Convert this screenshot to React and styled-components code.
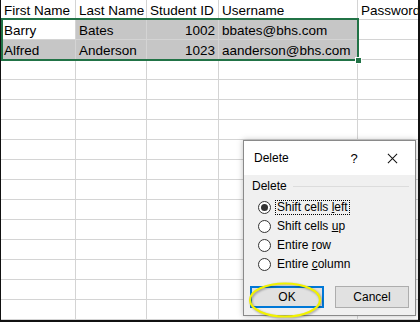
import React from "react";
import styled, { createGlobalStyle } from "styled-components";

const GlobalStyle = createGlobalStyle`
  html, body {
    margin: 0;
    padding: 0;
    background: #fff;
  }
`;

const columns = [75, 71, 72, 139, 110];

const rows = [
  ["First Name", "Last Name", "Student ID", "Username", "Password"],
  ["Barry", "Bates", "1002", "bbates@bhs.com", ""],
  ["Alfred", "Anderson", "1023", "aanderson@bhs.com", ""],
];

const TOTAL_ROWS = 17;

function isSelected(r, c) {
  return (r === 1 || r === 2) && c <= 3 && !(r === 1 && c === 0);
}

function Radio({ checked, focused, children }) {
  return (
    <RadioRow>
      <RadioCircle $checked={checked} />
      <RadioLabel $focused={focused}>{children}</RadioLabel>
    </RadioRow>
  );
}

export default function App() {
  const cells = [];
  for (let r = 0; r < TOTAL_ROWS; r++) {
    for (let c = 0; c < columns.length; c++) {
      const text = rows[r] ? rows[r][c] : "";
      cells.push(
        <Cell
          key={`${r}-${c}`}
          $selected={isSelected(r, c)}
          $numeric={r > 0 && c === 2}
        >
          {text}
        </Cell>
      );
    }
  }

  return (
    <>
      <GlobalStyle />
      <Frame>
        <Sheet>{cells}</Sheet>
        <Selection>
          <FillHandle />
        </Selection>

        <Dialog>
          <TitleBar>
            <Title>Delete</Title>
            <TitleButtons>
              <Help>?</Help>
              <CloseIcon viewBox="0 0 12 12">
                <path d="M1 1 L11 11 M11 1 L1 11" stroke="#111" strokeWidth="1.1" />
              </CloseIcon>
            </TitleButtons>
          </TitleBar>
          <Body>
            <GroupHeader>
              <GroupLabel>Delete</GroupLabel>
              <GroupLine />
            </GroupHeader>
            <RadioList>
              <Radio checked focused>
                Shift cells <u>l</u>eft
              </Radio>
              <Radio>
                Shift cells <u>u</u>p
              </Radio>
              <Radio>
                Entire <u>r</u>ow
              </Radio>
              <Radio>
                Entire <u>c</u>olumn
              </Radio>
            </RadioList>
            <ButtonRow>
              <Button $primary>OK</Button>
              <Button>Cancel</Button>
            </ButtonRow>
          </Body>
        </Dialog>

        <Highlight width="80" height="44" viewBox="0 0 80 44">
          <ellipse
            cx="40"
            cy="22"
            rx="35"
            ry="16.5"
            fill="none"
            stroke="#f2f200"
            strokeWidth="2.2"
          />
        </Highlight>
      </Frame>
    </>
  );
}

const Frame = styled.div`
  position: relative;
  width: 420px;
  height: 322px;
  box-sizing: border-box;
  border-left: 1px solid #111;
  border-right: 2px solid #111;
  border-bottom: 2px solid #111;
  overflow: hidden;
  background: #fff;
`;

const Sheet = styled.div`
  display: grid;
  grid-template-columns: ${columns.map((w) => `${w}px`).join(" ")};
  grid-auto-rows: 20px;
  font-family: "Liberation Sans", Arial, sans-serif;
  font-size: 13.5px;
  color: #000;
`;

const Cell = styled.div`
  box-sizing: border-box;
  display: flex;
  align-items: center;
  justify-content: ${(p) => (p.$numeric ? "flex-end" : "flex-start")};
  padding: 1px 3px 0 3px;
  border-right: 1px solid #d4d4d4;
  border-bottom: 1px solid #d4d4d4;
  background: ${(p) => (p.$selected ? "#c6c6c6" : "#fff")};
  white-space: nowrap;
  overflow: visible;
`;

const Selection = styled.div`
  position: absolute;
  left: 0;
  top: 18px;
  width: 358px;
  height: 43px;
  box-sizing: border-box;
  border: 2px solid #217346;
  pointer-events: none;
`;

const FillHandle = styled.div`
  position: absolute;
  right: -5px;
  bottom: -5px;
  width: 5px;
  height: 5px;
  background: #217346;
  border: 1px solid #fff;
`;

const Dialog = styled.div`
  position: absolute;
  left: 242px;
  top: 140px;
  width: 173px;
  height: 176px;
  box-sizing: border-box;
  border: 1px solid #8a8a8a;
  background: #f0f0f0;
  box-shadow: 0 0 6px rgba(0, 0, 0, 0.25);
  display: flex;
  flex-direction: column;
  font-family: "Liberation Sans", Arial, sans-serif;
  font-size: 12px;
  color: #000;
`;

const TitleBar = styled.div`
  height: 34px;
  background: #fff;
  display: flex;
  align-items: center;
  justify-content: space-between;
  padding: 0 0 0 10px;
`;

const Title = styled.span`
  font-size: 12px;
`;

const TitleButtons = styled.div`
  display: flex;
  align-items: center;
`;

const Help = styled.span`
  width: 20px;
  text-align: center;
  font-size: 13px;
  margin-right: 23px;
`;

const CloseIcon = styled.svg`
  width: 11px;
  height: 11px;
  margin-right: 17px;
`;

const Body = styled.div`
  flex: 1;
  display: flex;
  flex-direction: column;
  padding: 4px 6px 0 6px;
`;

const GroupHeader = styled.div`
  display: flex;
  align-items: center;
  height: 14px;
  padding-left: 2px;
`;

const GroupLabel = styled.span`
  margin-right: 6px;
`;

const GroupLine = styled.div`
  flex: 1;
  height: 1px;
  background: #dcdcdc;
`;

const RadioList = styled.div`
  display: flex;
  flex-direction: column;
  margin-top: 5px;
  padding-left: 8px;
`;

const RadioRow = styled.div`
  display: flex;
  align-items: center;
  height: 19px;
`;

const RadioCircle = styled.span`
  box-sizing: border-box;
  width: 13px;
  height: 13px;
  border-radius: 50%;
  border: 1px solid #333;
  background: #fff;
  display: flex;
  align-items: center;
  justify-content: center;
  margin-right: 4px;
  &::after {
    content: "";
    width: 7px;
    height: 7px;
    border-radius: 50%;
    background: ${(p) => (p.$checked ? "#333" : "transparent")};
  }
`;

const RadioLabel = styled.span`
  padding: 0 1px;
  line-height: 13px;
  border: 1px dotted ${(p) => (p.$focused ? "#000" : "transparent")};
  u {
    text-decoration: underline;
  }
`;

const ButtonRow = styled.div`
  display: flex;
  justify-content: space-between;
  margin-top: 12px;
`;

const Button = styled.div`
  box-sizing: border-box;
  width: 74px;
  height: 22px;
  display: flex;
  align-items: center;
  justify-content: center;
  background: #e1e1e1;
  border: ${(p) => (p.$primary ? "2px solid #0078d7" : "1px solid #adadad")};
`;

const Highlight = styled.svg`
  position: absolute;
  left: 244px;
  top: 278px;
  overflow: visible;
  filter: drop-shadow(1px 1px 1px rgba(0, 0, 0, 0.35));
`;
